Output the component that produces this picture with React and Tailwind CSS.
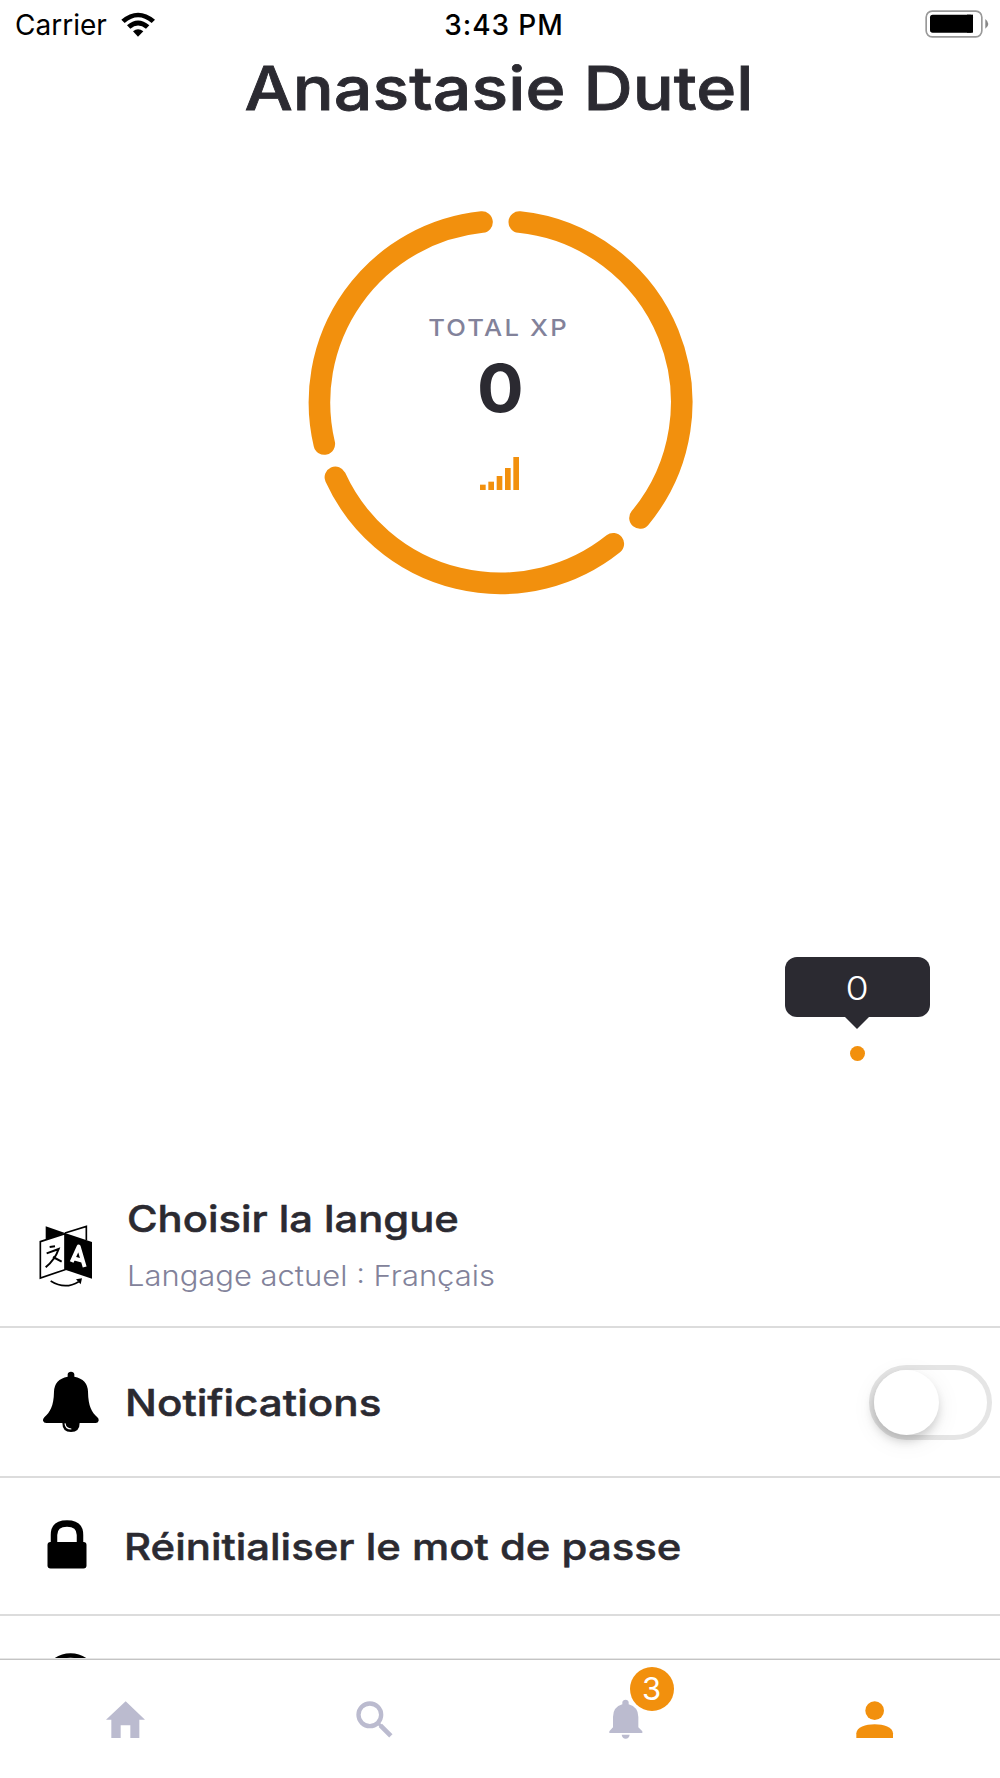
const ORANGE = "#f2900d";
const MUTED = "#bbbbcf";

function StatusBar() {
  return (
    <div className="flex h-[50px] items-center justify-between pl-[15px] pr-[11px] text-black">
      <div className="flex w-[200px] items-center gap-[14px]">
        <span className="whitespace-nowrap text-[28px] leading-none">Carrier</span>
        <svg className="-mt-px" width="34" height="25" viewBox="362 35 102 75">
          <path d="M363 58 Q413 16 464 58 L454 68 Q413 34 373 68Z" />
          <path d="M380 75 Q413 46 447 75 L437 85 Q413 66 390 85Z" />
          <path d="M398 93 Q413 80 429 93 L413 109Z" />
        </svg>
      </div>
      <span className="whitespace-nowrap pl-[4px] text-[28px] font-medium leading-none tracking-[0.9px]">3:43 PM</span>
      <div className="flex w-[200px] justify-end">
        <svg className="-mt-[2px]" width="64" height="28" viewBox="1274 31 192 84">
          <rect x="1277.500" y="34.500" width="167" height="77" rx="18" fill="none" stroke="#999" strokeWidth="5" />
          <rect x="1289" y="45" width="129" height="54" rx="8" />
          <rect x="1400" y="45" width="18" height="54" />
          <path d="M1455 58 Q1464 65 1464 73 Q1464 81 1455 87Z" fill="#888" />
        </svg>
      </div>
    </div>
  );
}

function Ring() {
  return (
    <div className="relative mt-[77px] flex h-[400px] w-full flex-col items-center">
      <svg className="absolute left-[300px] top-0" width="400" height="400" viewBox="300 202 400 400">
        <g fill="none" stroke={ORANGE} strokeWidth="21.600" strokeLinecap="round">
          <path d="M519.300 222.100A181.200 181.200 0 0 1 640 518" />
          <path d="M613.300 543.700A181.200 181.200 0 0 1 335.400 477.300" />
          <path d="M324.300 444A181.200 181.200 0 0 1 482 222.100" />
        </g>
      </svg>
      <span className="mt-[110px] mr-[3px] h-[32px] scale-x-[1.09] whitespace-nowrap text-[23.500px] font-medium leading-[32px] tracking-[2px] text-[#82829a]">TOTAL XP</span>
      <span className="mt-[6px] h-[76px] scale-x-[1.05] text-[66px] font-bold leading-[76px]">0</span>
      <svg className="mr-[0.5px] mt-[31px]" width="39" height="33" viewBox="572 801 117 99" fill={ORANGE}>
        <rect x="572" y="884" width="17" height="16" />
        <rect x="597" y="875" width="17" height="25" />
        <rect x="622" y="858" width="17" height="42" />
        <rect x="647" y="834" width="17" height="66" />
        <rect x="672" y="801" width="17" height="99" />
      </svg>
    </div>
  );
}

function ChartPoint() {
  return (
    <div className="mt-[354.5px] ml-[784.5px] flex h-[221.5px] w-[145px] flex-col items-center">
      <div className="flex h-[60.5px] w-full items-center justify-center rounded-[12px] bg-[#2b2a31]">
        <span className="scale-x-[1.14] pt-[4px] text-[33px] font-light leading-none text-white">0</span>
      </div>
      <svg width="24" height="12" viewBox="0 0 24 12"><path d="M0 0H24L12 12Z" fill="#2b2a31" /></svg>
      <div className="mt-[17px] size-[15px] rounded-full bg-[#f2900d]" />
    </div>
  );
}

function LanguageIcon() {
  return (
    <svg width="54" height="63" viewBox="118 136 162 189">
      <path d="M138 140L196 160L138 182Z" />
      <path d="M196 160L260 140V182" fill="none" stroke="#000" strokeWidth="5" />
      <path d="M122 186L196 162V270L122 295Z" fill="#fff" stroke="#000" strokeWidth="5" />
      <path d="M196 160L277 187V297L196 270Z" />
      <path d="M216 247L237 201L255 262M223 236L247 243" fill="none" stroke="#fff" strokeWidth="12" strokeLinejoin="round" />
      <path d="M150 202L166 200M141 221L177 208Q166 240 138 263M160 232L186 246" fill="none" stroke="#000" strokeWidth="6" />
      <path d="M153 304Q196 331 237 306" fill="none" stroke="#000" strokeWidth="5" />
      <path d="M229 299L247 296L243 314Z" />
    </svg>
  );
}

function BellIcon() {
  return (
    <svg width="58" height="62" viewBox="125 91 174 186">
      <path d="M202 108V101Q203 93 212 93Q221 93 222 101V108Q262 116 263 153C264 198 274 213 291 230Q296 234 295 240Q293 247 286 247H138Q130 247 128 240Q127 235 132 230C149 213 160 198 161 153Q162 116 202 108Z" />
      <path d="M186 246H238Q238 274 212 274Q186 274 186 246Z" />
      <path d="M194 248Q196 265 213 265" fill="none" stroke="#fff" strokeWidth="3.500" />
    </svg>
  );
}

function Toggle() {
  return (
    <div className="flex h-[75px] w-[123px] items-center rounded-full border-[5px] border-[#e5e5e5]">
      <div className="size-[65px] shrink-0 rounded-full bg-white shadow-[-1px_6px_10px_rgba(0,0,0,0.16),0_6px_24px_rgba(0,0,0,0.08)]" />
    </div>
  );
}

function Settings() {
  return (
    <div className="h-[481px] overflow-hidden border-b border-[#e6e6e6]">
      <div className="flex h-[150px] border-b-2 border-[#dcdcdc]">
        <div className="w-[127px] shrink-0 pl-[39px] pt-[47px]"><LanguageIcon /></div>
        <div className="flex flex-col items-start">
          <span className="mt-[17px] h-[48px] origin-left scale-x-[1.128] whitespace-nowrap text-[37px] font-medium leading-[48px] [-webkit-text-stroke:0.5px]">Choisir la langue</span>
          <span className="mt-[13px] h-[40px] origin-left scale-x-[1.105] whitespace-nowrap text-[28px] font-light leading-[40px] text-[#82829a]">Langage actuel : Français</span>
        </div>
      </div>
      <div className="flex h-[150px] items-center border-b-2 border-[#dcdcdc] pr-[8px]">
        <div className="w-[125px] shrink-0 pl-[42px]"><BellIcon /></div>
        <span className="grow origin-left scale-x-[1.14] whitespace-nowrap text-[37px] font-medium leading-none [-webkit-text-stroke:0.5px]">Notifications</span>
        <Toggle />
      </div>
      <div className="flex h-[138px] items-center border-b-2 border-[#dcdcdc]">
        <div className="w-[124px] shrink-0 pb-[4px] pl-[47px]">
          <svg width="40" height="49" viewBox="0 0 40 49">
            <path d="M7 24V15Q7 3.500 20 3.500Q33 3.500 33 15V24" fill="none" stroke="#000" strokeWidth="6.500" />
            <rect x="0.500" y="22" width="39" height="26.500" rx="3" />
          </svg>
        </div>
        <span className="origin-left scale-x-[1.132] whitespace-nowrap text-[37px] font-medium leading-none [-webkit-text-stroke:0.5px]">Réinitialiser le mot de passe</span>
      </div>
      <div className="pl-[42px] pt-[37px]">
        <svg width="57" height="57" viewBox="0 0 57 57"><circle cx="28.500" cy="28.500" r="26" fill="none" stroke="#000" strokeWidth="4.500" /></svg>
      </div>
    </div>
  );
}

function TabBar() {
  return (
    <div className="grid h-[119px] grid-cols-4 justify-items-center border-t border-[#c4c4c4] bg-white">
      <svg className="mt-[41px]" width="39" height="37" viewBox="77 123 117 111" fill={MUTED}>
        <path d="M136 124L194 179H177V234H150V196H121V234H93V179H77Z" />
      </svg>
      <svg className="mt-[41px] mr-px" width="37" height="37" viewBox="829 123 111 111" fill="none" stroke={MUTED}>
        <circle cx="870.500" cy="164.500" r="34" strokeWidth="13" />
        <path d="M896 190L905 199" strokeWidth="9" />
        <path d="M902 196L933.500 227.500" strokeWidth="14" />
      </svg>
      <div className="relative mt-[39px] ml-px h-[41px] w-[34px]">
        <svg width="34" height="41" viewBox="86 148 102 123" fill={MUTED}>
          <path d="M126 164V158Q127 150 136 150Q144 150 145 158V164Q174 172 174 202V233L186 245V250H87V245L98 233V202Q98 172 126 164Z" />
          <path d="M124 255H148Q146 267 136 267Q126 267 124 255Z" />
        </svg>
        <div className="absolute left-[21px] top-[-32px] flex size-[44px] items-center justify-center rounded-full bg-[#f2900d]">
          <span className="pb-[2px] text-[31px] leading-none text-white">3</span>
        </div>
      </div>
      <svg className="mt-[41px]" width="38" height="38" viewBox="828 152 114 114" fill={ORANGE}>
        <circle cx="884" cy="181" r="28" />
        <path d="M829 263V249C830 213 938 213 939 249V263Z" />
      </svg>
    </div>
  );
}

export default function App() {
  return (
    <div className="h-[1778px] w-[1000px] overflow-hidden bg-white font-['Inter',sans-serif] text-[#2b2a31]">
      <StatusBar />
      <div className="flex h-[75px] items-center justify-center pr-[2px]">
        <h1 className="scale-x-[1.136] whitespace-nowrap text-[60px] font-medium leading-none [-webkit-text-stroke:0.8px]">Anastasie Dutel</h1>
      </div>
      <Ring />
      <ChartPoint />
      <Settings />
      <TabBar />
    </div>
  );
}
